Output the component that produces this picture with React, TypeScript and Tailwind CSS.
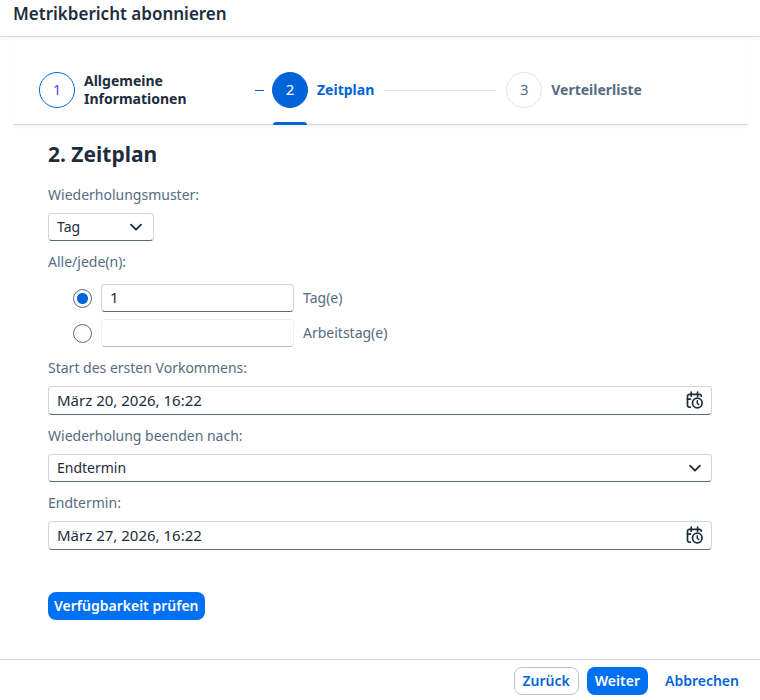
import { useState } from "react";
import type { ReactNode } from "react";
import clsx from "clsx";

const fieldClass =
  "w-full rounded border border-[#cfd6de] border-b-[#556b82] bg-white pl-2 text-[#1d2d3e] outline-none";

const buttonClass = "h-7 rounded-lg font-semibold";

const ChevronIcon = ({ className }: { className?: string }) => (
  <svg
    viewBox="0 0 16 16"
    fill="none"
    stroke="#1d2d3e"
    strokeWidth="1.8"
    strokeLinecap="round"
    strokeLinejoin="round"
    className={clsx("pointer-events-none absolute top-1.5 size-4", className)}
    aria-hidden="true"
  >
    <path d="M3 5.7l5 5 5-5" />
  </svg>
);

const DateTimeIcon = () => (
  <svg
    viewBox="0 0 18 18"
    fill="none"
    stroke="#1d2d3e"
    strokeWidth="1.7"
    strokeLinecap="round"
    strokeLinejoin="round"
    className="size-[18px]"
    aria-hidden="true"
  >
    <path d="M4.2 16.2H3.4A1.9 1.9 0 0 1 1.5 14.3V5.2A1.9 1.9 0 0 1 3.4 3.3H13.4A1.9 1.9 0 0 1 15.3 5.2" />
    <path d="M5.2 1.2v4M11.6 1.2v4M1.5 8.1h3" />
    <circle cx="11.3" cy="12" r="4.8" />
    <path d="M11.3 9.8v2.4l1.4 1.3" strokeWidth="1.5" />
  </svg>
);

type FieldProps = {
  id: string;
  label: string;
  children: ReactNode;
};

const Field = ({ id, label, children }: FieldProps) => (
  <div className="flex flex-col gap-2">
    <label htmlFor={id} className="leading-5 text-[#556b82]">
      {label}
    </label>
    {children}
  </div>
);

type DateFieldProps = {
  id: string;
  label: string;
  value: string;
  onChange: (value: string) => void;
};

const DateField = ({ id, label, value, onChange }: DateFieldProps) => (
  <Field id={id} label={label}>
    <div className="relative">
      <input
        id={id}
        type="text"
        value={value}
        onChange={(e) => onChange(e.target.value)}
        className={clsx(fieldClass, "block h-[29px] pr-10 pb-0.5 text-[15px]")}
      />
      <button
        type="button"
        aria-label="Auswahl öffnen"
        className="absolute top-0 right-2 flex h-7 items-center"
      >
        <DateTimeIcon />
      </button>
    </div>
  </Field>
);

const Step = ({
  number,
  title,
  circleClass,
  titleClass,
  active,
}: {
  number: number;
  title: string;
  circleClass: string;
  titleClass: string;
  active?: boolean;
}) => (
  <li
    className="relative flex items-center"
    aria-current={active ? "step" : undefined}
  >
    <a href={`#step-${number}`} className="flex items-center gap-[9px]">
      <span
        className={clsx(
          "flex size-9 shrink-0 items-center justify-center rounded-full border text-[15px]",
          circleClass,
        )}
      >
        {number}
      </span>
      <span className={clsx("leading-[18px] font-bold", titleClass)}>
        {title}
      </span>
    </a>
    {active && (
      <span className="absolute -bottom-[17px] left-px h-[3px] w-[34px] rounded-t-sm bg-[#0064d9]" />
    )}
  </li>
);

const Stepper = () => (
  <nav className="mr-3 ml-[13px] border-b border-[#d9d9d9] pt-[35px] pb-4 pl-[26px] shadow-[0_3px_3px_-1px_rgba(0,0,0,0.05)]">
    <ol className="flex h-9 items-stretch">
      <Step
        number={1}
        title="Allgemeine Informationen"
        circleClass="border-[#0064d9] text-[#5b4fd6]"
        titleClass="w-40 pr-12 text-[#1d2d3e]"
      />
      <li className="mr-2 ml-[11px] flex w-[9px] items-center">
        <span className="h-px w-full bg-[#0064d9]" />
      </li>
      <Step
        number={2}
        title="Zeitplan"
        circleClass="border-[#0064d9] bg-[#0064d9] text-white"
        titleClass="text-[#0064d9]"
        active
      />
      <li className="mx-[10px] flex max-w-[112px] flex-1 items-center">
        <span className="h-px w-full bg-[#e2e2e2]" />
      </li>
      <Step
        number={3}
        title="Verteilerliste"
        circleClass="border-[#e2e2e2] text-[#556b82]"
        titleClass="text-[#556b82]"
      />
    </ol>
  </nav>
);

type RepeatRowProps = {
  id: string;
  label: string;
  checked: boolean;
  value: string;
  onSelect: () => void;
  onChange: (value: string) => void;
};

const RepeatRow = ({
  id,
  label,
  checked,
  value,
  onSelect,
  onChange,
}: RepeatRowProps) => (
  <div className="flex items-center">
    <input
      id={id}
      type="radio"
      name="interval"
      aria-label={label}
      checked={checked}
      onChange={onSelect}
      className="size-[19px] shrink-0 appearance-none rounded-full border border-[#556b82] bg-white checked:bg-[radial-gradient(circle,#0064d9_5px,transparent_6px)]"
    />
    <input
      id={`${id}-value`}
      type="text"
      value={value}
      disabled={!checked}
      onChange={(e) => onChange(e.target.value)}
      className={clsx(
        fieldClass,
        "mr-[9px] ml-[9px] h-7 max-w-[193px] pb-0.5 text-[15px] disabled:border-[#eceef1] disabled:border-b-[#b4bfca]",
      )}
    />
    <label htmlFor={`${id}-value`} className="text-[#556b82]">
      {label}
    </label>
  </div>
);

const App = () => {
  const [pattern, setPattern] = useState("Tag");
  const [unit, setUnit] = useState("day");
  const [days, setDays] = useState("1");
  const [workdays, setWorkdays] = useState("");
  const [start, setStart] = useState("März 20, 2026, 16:22");
  const [endMode, setEndMode] = useState("Endtermin");
  const [end, setEnd] = useState("März 27, 2026, 16:22");

  return (
    <div className="flex min-h-screen flex-col bg-white font-['Noto_Sans',sans-serif] text-sm text-[#1d2d3e]">
      <header className="border-b border-[#d9d9d9] px-[13px] pt-0.5 pb-[10px] shadow-[0_2px_3px_rgba(0,0,0,0.04)]">
        <h1 className="text-[17px] leading-6 font-semibold">
          Metrikbericht abonnieren
        </h1>
      </header>

      <Stepper />

      <main className="flex-1 px-12 pt-[15px]">
        <h2 className="text-[21px] leading-7 font-bold">2. Zeitplan</h2>

        <form
          className="mt-[17px] flex flex-col gap-[11px]"
          onSubmit={(e) => e.preventDefault()}
        >
          <Field id="pattern" label="Wiederholungsmuster:">
            <div className="relative w-[106px]">
              <select
                id="pattern"
                value={pattern}
                onChange={(e) => setPattern(e.target.value)}
                className={clsx(fieldClass, "block h-7 appearance-none")}
              >
                <option>Tag</option>
                <option>Woche</option>
                <option>Monat</option>
              </select>
              <ChevronIcon className="right-[10px]" />
            </div>
          </Field>

          <fieldset>
            <legend className="leading-5 text-[#556b82]">Alle/jede(n):</legend>
            <div className="mt-3 flex flex-col gap-[7px] pl-[25px]">
              <RepeatRow
                id="day"
                label="Tag(e)"
                checked={unit === "day"}
                value={days}
                onSelect={() => setUnit("day")}
                onChange={setDays}
              />
              <RepeatRow
                id="workday"
                label="Arbeitstag(e)"
                checked={unit === "workday"}
                value={workdays}
                onSelect={() => setUnit("workday")}
                onChange={setWorkdays}
              />
            </div>
          </fieldset>

          <DateField
            id="start"
            label="Start des ersten Vorkommens:"
            value={start}
            onChange={setStart}
          />

          <Field id="end-mode" label="Wiederholung beenden nach:">
            <div className="relative">
              <select
                id="end-mode"
                value={endMode}
                onChange={(e) => setEndMode(e.target.value)}
                className={clsx(fieldClass, "block h-7 appearance-none")}
              >
                <option>Endtermin</option>
                <option>Anzahl Vorkommen</option>
              </select>
              <ChevronIcon className="right-[9px]" />
            </div>
          </Field>

          <DateField
            id="end"
            label="Endtermin:"
            value={end}
            onChange={setEnd}
          />

          <button
            type="button"
            className={clsx(
              buttonClass,
              "mt-[31px] self-start bg-[#0070f2] px-1.5 text-white",
            )}
          >
            Verfügbarkeit prüfen
          </button>
        </form>
      </main>

      <footer className="flex justify-end gap-2 border-t border-[#d9d9d9] px-3 pt-[7px] pb-[5px]">
        <button
          type="button"
          className={clsx(
            buttonClass,
            "border border-[#bcc3ca] px-2 text-[#0064d9]",
          )}
        >
          Zurück
        </button>
        <button
          type="button"
          className={clsx(buttonClass, "bg-[#0070f2] px-2 text-white")}
        >
          Weiter
        </button>
        <button
          type="button"
          className={clsx(buttonClass, "px-[9px] text-[#0064d9]")}
        >
          Abbrechen
        </button>
      </footer>
    </div>
  );
};

export default App;
